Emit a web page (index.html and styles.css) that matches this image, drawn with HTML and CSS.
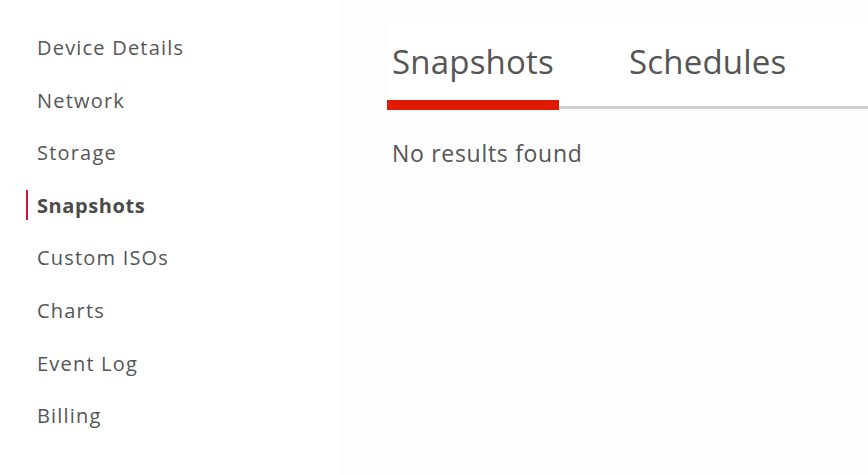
FILE: index.html
```html
<!DOCTYPE html>
<html lang="en">
<head>
<meta charset="utf-8">
<title>Snapshots</title>
<link rel="stylesheet" href="styles.css">
</head>
<body>
<div class="layout">
  <nav class="sidebar">
    <a class="nav-item">Device Details</a>
    <a class="nav-item">Network</a>
    <a class="nav-item">Storage</a>
    <a class="nav-item active">Snapshots</a>
    <a class="nav-item">Custom ISOs</a>
    <a class="nav-item">Charts</a>
    <a class="nav-item">Event Log</a>
    <a class="nav-item">Billing</a>
  </nav>
  <main class="main">
    <div class="tabs">
      <div class="tab active">Snapshots</div>
      <div class="tab">Schedules</div>
    </div>
    <p class="empty">No results found</p>
  </main>
</div>
</body>
</html>
```

FILE: styles.css
```css
html, body {
  margin: 0;
  padding: 0;
  height: 100%;
}
body {
  font-family: "Open Sans", Lato, sans-serif;
  color: #555;
  background: #fff;
}
.layout {
  display: flex;
  min-height: 100%;
}
.sidebar {
  width: 340px;
  flex: none;
  display: flex;
  flex-direction: column;
  padding-top: 22px;
  background: #fff;
}
.nav-item {
  position: relative;
  display: block;
  padding-left: 37px;
  font-size: 20px;
  line-height: 52.6px;
  letter-spacing: 1.2px;
  color: #555;
}
.nav-item.active {
  font-weight: 700;
  letter-spacing: 0.6px;
  color: #4a4a4a;
}
.nav-item.active::before {
  content: "";
  position: absolute;
  left: 26px;
  top: 10px;
  width: 2px;
  height: 30px;
  background: #d3123a;
}
.main {
  flex: 1;
  background: #fdfdfd;
  padding-left: 47px;
  padding-top: 22px;
}
.tabs {
  display: flex;
  align-items: flex-end;
  background: #fff;
  border-bottom: 3px solid #cfcfcf;
  gap: 65px;
}
.tab {
  font-size: 33px;
  line-height: 39.6px;
  letter-spacing: 0.2px;
  padding: 20px 5px 18px;
  margin-bottom: -4px;
  border-bottom: 10px solid transparent;
  color: #555;
}
.tab.active {
  border-bottom-color: #e01a00;
}
.empty {
  margin: 31px 0 0 5px;
  font-size: 23px;
  line-height: 27.6px;
  letter-spacing: 0.7px;
  color: #555;
}
```
